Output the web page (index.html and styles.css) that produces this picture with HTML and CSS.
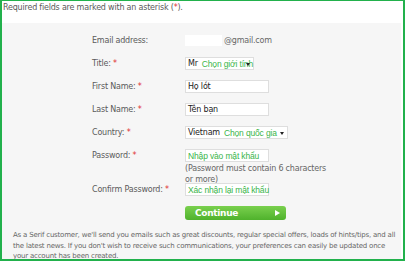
FILE: index.html
```html
<!DOCTYPE html>
<html lang="en">
<head>
    <meta charset="UTF-8">
    <title>Create account</title>
    <link rel="stylesheet" href="styles.css">
</head>
<body>
    <div class="frame">
        <p class="note">Required fields are marked with an asterisk (<span class="req">*</span>).</p>

        <div class="panel">
            <div class="form">
                <label>Email address:</label>
                <div class="field"><span class="email-mask"></span>@gmail.com</div>

                <label>Title: <span class="req">*</span></label>
                <div class="field">
                    <div class="box select title-select">
                        <span class="value">Mr</span>
                        <span class="hint">Chọn giới tính</span>
                        <span class="arrow"></span>
                    </div>
                </div>

                <label>First Name: <span class="req">*</span></label>
                <div class="field"><div class="box text">Họ lót</div></div>

                <label>Last Name: <span class="req">*</span></label>
                <div class="field"><div class="box text">Tên bạn</div></div>

                <label>Country: <span class="req">*</span></label>
                <div class="field">
                    <div class="box select country-select">
                        <span class="value">Vietnam</span>
                        <span class="hint">Chọn quốc gia</span>
                        <span class="arrow"></span>
                    </div>
                </div>

                <label class="top">Password: <span class="req">*</span></label>
                <div class="field stack">
                    <div class="box text"><span class="hint">Nhập vào mật khẩu</span></div>
                    <div class="help">(Password must contain 6 characters or more)</div>
                </div>

                <label>Confirm Password: <span class="req">*</span></label>
                <div class="field"><div class="box text"><span class="hint">Xác nhận lại mật khẩu</span></div></div>

                <span></span>
                <div class="field"><button class="continue">Continue <span class="play"></span></button></div>
            </div>

            <p class="info">As a Serif customer, we'll send you emails such as great discounts, regular special offers, loads of hints/tips, and all the latest news. If you don't wish to receive such communications, your preferences can easily be updated once your account has been created.</p>
        </div>
    </div>
</body>
</html>
```

FILE: styles.css
```css
html, body {
    margin: 0;
    height: 100%;
}
body {
    font-family: "DejaVu Sans", Verdana, sans-serif;
    color: #5a5a5a;
    background: #fff;
}
.frame {
    height: 100%;
    box-sizing: border-box;
    border: 2px solid #22b14c;
    border-top-width: 1px;
    display: flex;
    flex-direction: column;
    overflow: hidden;
}
.note {
    flex-shrink: 0;
    margin: 0;
    padding: 2px 1px 0;
    height: 20px;
    font-size: 8px;
    letter-spacing: -0.2px;
}
.req {
    color: #e03030;
}
.panel {
    flex: 1;
    background: #f6f6f6;
    margin-right: 2px;
    padding: 11px 0 0;
    overflow: hidden;
}
.form {
    display: grid;
    grid-template-columns: 93px auto;
    row-gap: 10px;
    align-items: center;
    padding-left: 90px;
    font-size: 8px;
    letter-spacing: -0.2px;
}
.form label.top {
    align-self: start;
    padding-top: 2px;
}
.field {
    display: flex;
    align-items: center;
    height: 13px;
    color: #666;
}
.field.stack {
    display: block;
    height: auto;
}
.email-mask {
    display: inline-block;
    width: 37px;
    height: 11px;
    background: #fff;
    margin-right: 2px;
}
.box {
    position: relative;
    box-sizing: border-box;
    height: 13px;
    background: #fff;
    border: 1px solid #dedede;
    display: flex;
    align-items: center;
    padding: 0 2px;
    color: #222;
    white-space: nowrap;
}
.box.text {
    width: 84px;
}
.title-select {
    width: 69px;
}
.country-select {
    width: 103px;
}
.value {
    margin-right: 4px;
}
.hint {
    font-family: "Liberation Sans", Arial, sans-serif;
    font-size: 8.5px;
    letter-spacing: -0.15px;
    color: #39b54a;
}
.arrow {
    position: absolute;
    right: 3px;
    top: 5px;
    width: 0;
    height: 0;
    border-left: 2px solid transparent;
    border-right: 2px solid transparent;
    border-top: 3px solid #222;
}
.help {
    width: 150px;
    margin-top: 2px;
    margin-bottom: -12px;
    line-height: 10.5px;
    color: #666;
}
.continue {
    width: 101px;
    height: 14px;
    margin-top: 1px;
    border: none;
    border-radius: 3px;
    background: linear-gradient(#7ad04e, #4fb22c);
    color: #fff;
    font-family: "DejaVu Sans", Verdana, sans-serif;
    font-weight: bold;
    font-size: 9px;
    letter-spacing: -0.3px;
    display: flex;
    align-items: center;
    padding: 0 6px 0 10px;
}
.play {
    margin-left: auto;
    width: 0;
    height: 0;
    border-top: 3px solid transparent;
    border-bottom: 3px solid transparent;
    border-left: 5px solid #fff;
}
.info {
    margin: 11px 0 0;
    padding: 0 2px 0 11px;
    font-size: 7px;
    line-height: 10.5px;
    letter-spacing: -0.2px;
    color: #666;
}
```
